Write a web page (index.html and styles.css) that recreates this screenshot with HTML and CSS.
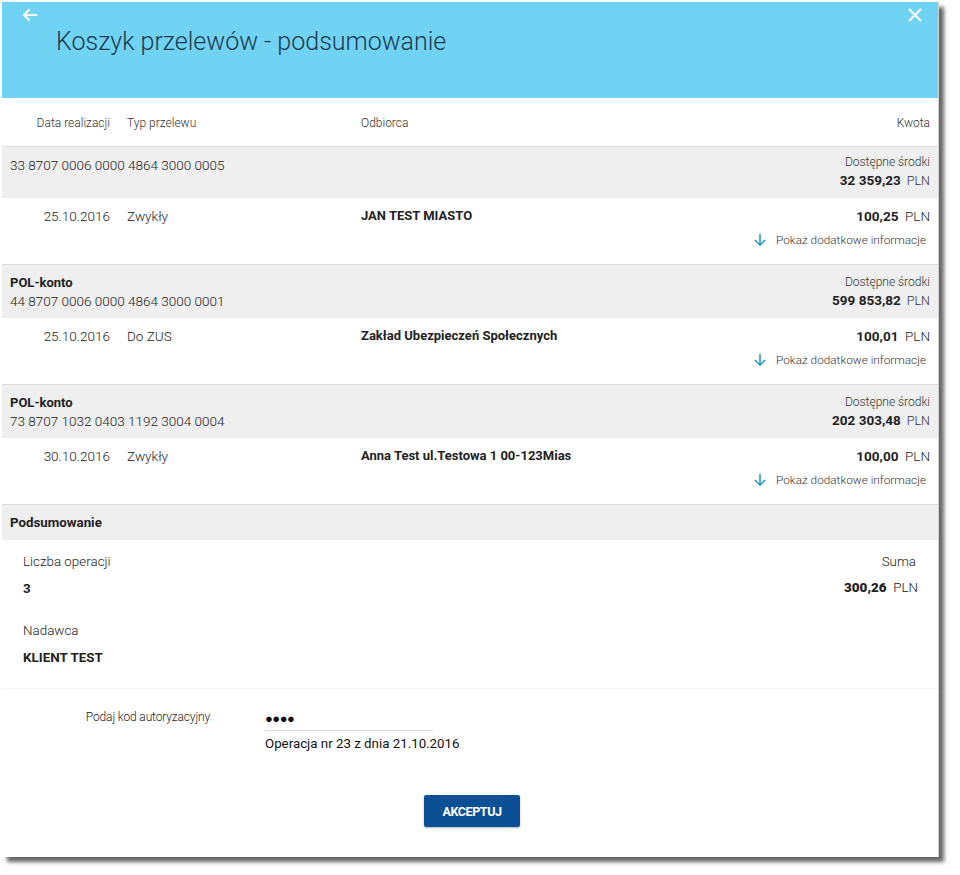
FILE: index.html
```html
<!DOCTYPE html>
<html lang="pl">
<head>
<meta charset="utf-8">
<title>Koszyk przelewów - podsumowanie</title>
<link rel="stylesheet" href="styles.css">
</head>
<body>
<div class="dialog">
  <header class="hdr">
    <div class="hdr-icons">
      <svg class="ico-back" width="16" height="14" viewBox="0 0 16 14"><path d="M15 7H2M7.5 1.5L2 7l5.5 5.5" fill="none" stroke="#fff" stroke-width="2"/></svg>
      <svg class="ico-close" width="14" height="14" viewBox="0 0 14 14"><path d="M1 1l12 12M13 1L1 13" fill="none" stroke="#fff" stroke-width="2"/></svg>
    </div>
    <h1 class="title">Koszyk przelewów - podsumowanie</h1>
  </header>

  <div class="row cols">
    <div class="c-date">Data realizacji</div>
    <div>Typ przelewu</div>
    <div>Odbiorca</div>
    <div class="c-amt">Kwota</div>
  </div>

  <div class="acct acct-first">
    <div class="acct-l"><div class="acct-no">33 8707 0006 0000 4864 3000 0005</div></div>
    <div class="acct-r"><div>Dostępne środki</div><div><b>32 359,23</b>&nbsp; PLN</div></div>
  </div>
  <div class="row tr">
    <div class="c-date">25.10.2016</div>
    <div>Zwykły</div>
    <div class="rcp">JAN TEST MIASTO</div>
    <div class="c-amt"><div><b>100,25</b>&nbsp; PLN</div>
      <div class="more"><svg width="14" height="14" viewBox="0 0 14 14"><path d="M7 1v11M1.8 7L7 12.2 12.2 7" fill="none" stroke="#2a9bc2" stroke-width="1.6"/></svg>Pokaż dodatkowe informacje</div></div>
  </div>

  <div class="acct">
    <div class="acct-l"><div class="acct-name">POL-konto</div><div class="acct-no">44 8707 0006 0000 4864 3000 0001</div></div>
    <div class="acct-r"><div>Dostępne środki</div><div><b>599 853,82</b>&nbsp; PLN</div></div>
  </div>
  <div class="row tr">
    <div class="c-date">25.10.2016</div>
    <div>Do ZUS</div>
    <div class="rcp">Zakład Ubezpieczeń Społecznych</div>
    <div class="c-amt"><div><b>100,01</b>&nbsp; PLN</div>
      <div class="more"><svg width="14" height="14" viewBox="0 0 14 14"><path d="M7 1v11M1.8 7L7 12.2 12.2 7" fill="none" stroke="#2a9bc2" stroke-width="1.6"/></svg>Pokaż dodatkowe informacje</div></div>
  </div>

  <div class="acct">
    <div class="acct-l"><div class="acct-name">POL-konto</div><div class="acct-no">73 8707 1032 0403 1192 3004 0004</div></div>
    <div class="acct-r"><div>Dostępne środki</div><div><b>202 303,48</b>&nbsp; PLN</div></div>
  </div>
  <div class="row tr">
    <div class="c-date">30.10.2016</div>
    <div>Zwykły</div>
    <div class="rcp">Anna Test ul.Testowa 1 00-123Mias</div>
    <div class="c-amt"><div><b>100,00</b>&nbsp; PLN</div>
      <div class="more"><svg width="14" height="14" viewBox="0 0 14 14"><path d="M7 1v11M1.8 7L7 12.2 12.2 7" fill="none" stroke="#2a9bc2" stroke-width="1.6"/></svg>Pokaż dodatkowe informacje</div></div>
  </div>

  <div class="sum-bar">Podsumowanie</div>
  <div class="sum">
    <div class="sum-l">
      <div class="lbl">Liczba operacji</div>
      <div class="val">3</div>
      <div class="lbl lbl2">Nadawca</div>
      <div class="val">KLIENT TEST</div>
    </div>
    <div class="sum-r">
      <div class="lbl">Suma</div>
      <div class="val"><b>300,26</b>&nbsp; <span class="cur">PLN</span></div>
    </div>
  </div>

  <div class="auth">
    <div class="auth-row">
      <div class="auth-lbl">Podaj kod autoryzacyjny</div>
      <div class="auth-field">
        <div class="pwd">●●●●</div>
        <div class="op">Operacja nr 23 z dnia 21.10.2016</div>
      </div>
    </div>
    <div class="btn-wrap"><button class="btn">AKCEPTUJ</button></div>
  </div>
</div>
</body>
</html>
```
FILE: styles.css
```css
* { box-sizing: border-box; }
html, body { height: 100%; }
body {
  margin: 0;
  background: #fff;
  font-family: Roboto, "Liberation Sans", Arial, sans-serif;
  font-size: 12px;
  color: #333;
  padding: 2px 0 0 2px;
}
.dialog {
  width: 937px;
  height: 855px;
  background: #fff;
  border-right: 1px solid #d0d0d0;
  box-shadow: 5px 5px 4px rgba(0,0,0,0.6);
  display: flex;
  flex-direction: column;
}
.hdr {
  background: #71d3f4;
  height: 96px;
  flex: none;
  padding: 0 16px 0 0;
}
.hdr-icons {
  display: flex;
  justify-content: space-between;
  padding: 6px 0 0 20px;
  height: 20px;
}
.title {
  margin: 6px 0 0 54px;
  font-weight: 300;
  font-size: 25px;
  line-height: 28px;
  color: #1c3a4e;
}
.row {
  display: grid;
  grid-template-columns: 108px 217px 1fr auto;
  column-gap: 17px;
  padding-right: 8px;
  border-bottom: 1px solid #dcdcdc;
  flex: none;
}
.c-date { text-align: right; }
.c-amt { text-align: right; }
.cols {
  height: 49px;
  align-items: center;
  font-weight: 300;
  color: #333;
  padding-top: 1px;
}
.acct {
  background: #efefef;
  display: flex;
  justify-content: space-between;
  padding: 8px 8px 7px 8px;
  line-height: 19px;
  font-size: 12px;
  flex: none;
}
.acct-first { height: 51px; padding-top: 6px; }
.acct-first .acct-l { padding-top: 3px; }
.acct-no { font-size: 13.5px; font-weight: 300; color: #222; }
.acct-name { font-weight: 700; font-size: 13px; color: #222; }
.acct-r { text-align: right; font-weight: 300; }
.acct-r b { font-weight: 700; font-size: 13.5px; color: #222; }
.acct-r div + div { line-height: 17px; font-size: 12.5px; }
.tr {
  padding-top: 9px;
  height: 67px;
  line-height: 18px;
  font-size: 13.5px;
  font-weight: 300;
  color: #222;
}
.rcp { font-weight: 700; color: #222; font-size: 13px; }
.tr b { font-weight: 700; color: #222; }
.more {
  margin-top: 6px;
  display: flex;
  align-items: center;
  justify-content: flex-end;
  gap: 9px;
  font-size: 11.8px;
  margin-right: 4px;
  color: #333;
}
.sum-bar {
  background: #efefef;
  height: 35px;
  line-height: 35px;
  padding-left: 8px;
  font-weight: 700;
  font-size: 13.3px;
  color: #222;
  flex: none;
}
.sum {
  display: flex;
  justify-content: space-between;
  padding: 13px 20px 0 21px;
  height: 149px;
  border-bottom: 1px solid #f3f3f3;
  font-size: 13.4px;
  flex: none;
}
.lbl { font-weight: 300; line-height: 18px; color: #222; }
.val { font-weight: 700; line-height: 18px; margin-top: 9px; color: #222; }
.lbl2 { margin-top: 24px; }
.sum-r { text-align: right; }
.sum-r .lbl { margin-right: 2px; }
.sum-r .val { margin-top: 8px; }
.cur { font-weight: 300; }
.auth {
  flex: 1;
  padding-top: 19px;
}
.auth-row {
  display: flex;
  align-items: flex-start;
}
.auth-lbl {
  width: 208px;
  text-align: right;
  font-size: 12px;
  letter-spacing: -0.15px;
  font-weight: 300;
  line-height: 18px;
  color: #222;
}
.auth-field {
  margin-left: 55px;
  width: 168px;
}
.pwd {
  font-size: 13px;
  line-height: 18px;
  letter-spacing: -0.5px;
  padding-top: 2px;
  height: 23px;
  border-bottom: 1px solid #d8d8d8;
  color: #111;
}
.op {
  margin-top: 4px;
  white-space: nowrap;
  font-weight: 400;
  font-size: 13.3px;
  line-height: 18px;
  color: #111;
}
.btn-wrap {
  display: flex;
  justify-content: center;
  padding-left: 4px;
  margin-top: 42px;
}
.btn {
  width: 96px;
  height: 32px;
  border: 0;
  border-radius: 2px;
  background: #0b4f95;
  color: #fff;
  font-family: Roboto, "Liberation Sans", Arial, sans-serif;
  font-weight: 700;
  font-size: 12.5px;
  letter-spacing: -0.4px;
  box-shadow: 0 1px 2px rgba(0,0,0,0.3);
}
```
